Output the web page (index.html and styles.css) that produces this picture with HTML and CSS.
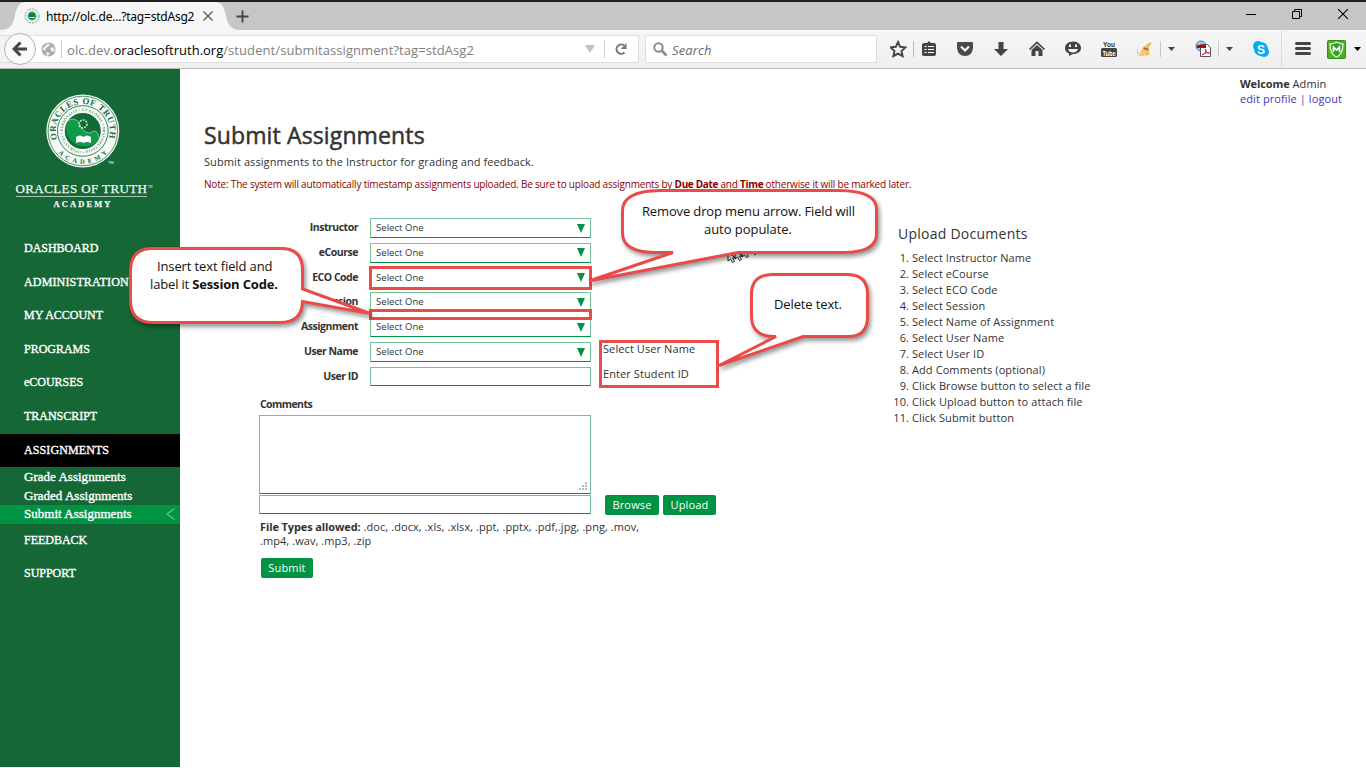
FILE: index.html
```html
<!DOCTYPE html>
<html lang="en">
<head>
<meta charset="utf-8">
<title>Submit Assignments</title>
<link rel="stylesheet" href="styles.css">
</head>
<body>
<header class="browser">
  <div class="tabbar">
    <svg class="tab-shape" width="240" height="28" viewBox="0 0 240 28"><path d="M0 28C10 28 13 23 15 13S20 0 27 0H215C222 0 224 5 226 14S231 28 241 28Z" fill="#f6f6f6"/></svg>
    <div class="tab">
      <svg class="favicon" width="16" height="16" viewBox="0 0 16 16"><circle cx="8" cy="8" r="7" fill="#eef7f1" stroke="#5cae81" stroke-dasharray="2 1"/><circle cx="8" cy="8" r="4.7" fill="#75b895"/><circle cx="8" cy="8" r="3.4" fill="#147c3e"/><path d="M5.5 9.5h5" stroke="#fff"/></svg>
      <span class="tab-title">http://olc.de...?tag=stdAsg2</span>
      <svg class="tab-close" width="12" height="12" viewBox="0 0 12 12"><path d="M1.5 1.5l9 9M10.5 1.5l-9 9" stroke="#555" stroke-width="1.2"/></svg>
    </div>
    <svg class="newtab" width="13" height="13" viewBox="0 0 13 13"><path d="M6.5 .5v12M.5 6.5h12" stroke="#444" stroke-width="1.8"/></svg>
    <div class="window-buttons">
      <svg width="10" height="10" viewBox="0 0 10 10"><path d="M0 5.500h10" stroke="#000"/></svg>
      <svg width="10" height="10" viewBox="0 0 10 10" fill="none" stroke="#000"><path d="M.5 2.500h7v7h-7zM2.500 2.500v-2h7v7h-2"/></svg>
      <svg width="10" height="10" viewBox="0 0 10 10"><path d="M0 0l10 10M10 0L0 10" stroke="#000" stroke-width="1.1"/></svg>
    </div>
  </div>
  <div class="toolbar">
    <div class="address">
      <div class="back"><svg width="16" height="16" viewBox="0 0 16 16" fill="none" stroke="#454545" stroke-width="3"><path d="M15 8H3M8.500 1.500L2 8l6.500 6.500"/></svg></div>
      <svg class="globe" width="15" height="15" viewBox="0 0 15 15"><circle cx="7.500" cy="7.500" r="7" fill="#aaa"/><path d="M7 1L9 3 7 5 5 6 4 9 1 7M9 6l3-1 2 3-2 2-2-1zM6 10l3 1-2 3-2-1z" fill="#eee"/></svg>
      <span class="sep"></span>
      <span class="url">olc.dev.<b>oraclesoftruth.org</b>/student/submitassignment?tag=stdAsg2</span>
      <svg class="url-arrow" width="10" height="8" viewBox="0 0 10 8"><path d="M0 0h10L5 8z" fill="#c3c3c3"/></svg>
      <span class="sep"></span>
      <svg class="reload" width="12" height="12" viewBox="0 0 12 12"><path d="M9.500 9.500A4.700 4.700 0 1 1 9 2.300" fill="none" stroke="#777" stroke-width="2"/><path d="M11.500 0v6H5.700z" fill="#777"/></svg>
    </div>
    <div class="search">
      <svg width="15" height="15" viewBox="0 0 15 15" fill="none" stroke="#8b8b8b"><circle cx="5.500" cy="5.500" r="4.200" stroke-width="2"/><path d="M8.500 8.500l5 5" stroke-width="2.600"/></svg>
      <span>Search</span>
    </div>
    <svg class="icons" width="476" height="38" viewBox="890 30 476 38">
      <path d="M898 42l2.200 4.800 5.200.6-3.900 3.600 1.100 5.200-4.600-2.600-4.600 2.600 1.100-5.200-3.900-3.600 5.200-.6z" fill="none" stroke="#444" stroke-width="1.900"/>
      <path d="M913.500 41v16" stroke="#bbb"/>
      <path d="M924 43h3l2-2 2 2h3q2 0 2 2v9q0 2-2 2h-10q-2 0-2-2v-9q0-2 2-2z" fill="#444"/>
      <path d="M924.500 46.500h2M924.500 49.500h2M924.500 52.500h2M928 46.500h6M928 49.500h6M928 52.500h6" stroke="#fff" stroke-width="1.200"/>
      <path d="M957 43q0-1 1-1h14q1 0 1 1v5q-1 8-8 8t-8-8z" fill="#4a4a4a"/><path d="M961 46.500l4 4 4-4" fill="none" stroke="#f8f8f8" stroke-width="2.200"/>
      <path d="M998.500 42h5v7h4.500l-7 7-7-7h4.500z" fill="#444"/>
      <path d="M1029.500 49.500l7.500-7 7.500 7" fill="none" stroke="#444" stroke-width="1.700"/><path d="M1031.500 50l5.500-5 5.500 5v6h-4v-5h-3v5h-4z" fill="#444"/>
      <path d="M1073 41.500c5 0 8 3 8 6.500s-3 6-8 6l-4 2v-2.500c-3-1-4-3-4-5.500 0-3.500 3-6.500 8-6.500z" fill="#444"/><path d="M1069 44.500h2v2.500h-2zM1075 44.500h2v2.500h-2zM1068 49h10q-1 3.500-5 3.500t-5-3.500z" fill="#f4f4f4"/>
      <text x="1103" y="47" class="you" textLength="12" lengthAdjust="spacingAndGlyphs">You</text><rect x="1101" y="48" width="16" height="9" rx="1.500" fill="#444"/><text x="1102.500" y="55.500" class="tube" textLength="13" lengthAdjust="spacingAndGlyphs">Tube</text>
      <path d="M1150 42l1.500 1-3 5 1 7-10 1-2-2 4-3 2-4z" fill="#efbe55"/><path d="M1143.500 48l5 1.500" stroke="#c6503a" stroke-width="1.400"/><path d="M1137 54l5-1M1139 55l5-3M1144 55l2-4" stroke="#fbe5a0"/><path d="M1137.500 49v5" stroke="#bccdb2"/>
      <path d="M1160.500 41v16M1218.500 41v16" stroke="#c2c8cf"/>
      <path d="M1168 47h7l-3.500 4zM1226 47h7l-3.500 4z" fill="#444"/>
      <circle cx="1201" cy="46" r="5" fill="#acc8e9" stroke="#4979b6"/><path d="M1200.500 44.500h7l3 3v9h-10z" fill="#fff" stroke="#555"/><path d="M1197 45h9v3h-9z" fill="#d00000"/><path d="M1202 55c4-2 4-4 3.500-6 0 3 2 4 4 4-3-.5-5 0-7.500 2z" fill="none" stroke="#c3202c"/>
      <circle cx="1258" cy="46" r="5" fill="#00aef0"/><circle cx="1264" cy="52" r="5" fill="#00aef0"/><circle cx="1261" cy="49" r="7" fill="#00aef0"/><text x="1257" y="53.500" class="skype">S</text>
      <path d="M1281.500 31v36" stroke="#dcdcdc"/>
      <path d="M1296.500 43.500h13M1296.500 48.500h13M1296.500 53.500h13" stroke="#444" stroke-width="3" stroke-linecap="round"/>
      <rect x="1327.500" y="40.500" width="18" height="18" rx="1" fill="#55ad20" stroke="#318c20"/><path d="M1330 44q4 0 6.500-2 2.500 2 6.500 2 0 10-6.500 13-6.500-3-6.500-13z" fill="#2f9d28" stroke="#e3f4df" stroke-width="1.300"/><path d="M1333.500 52v-5l3 3 3-3v5" fill="none" stroke="#fff" stroke-width="1.700"/>
      <path d="M1354 47h7l-3.500 4z" fill="#000"/>
    </svg>
  </div>
</header>
<div class="page">
  <aside class="sidebar">
    <svg class="logo" width="180" height="163" viewBox="0 0 180 163">
      <defs>
        <path id="ring-top" d="M57.100 70.300A27 27 0 1 1 108.500 70.300"/>
        <path id="ring-bottom" d="M50 62A32.800 32.800 0 0 0 115.600 62"/>
        <path id="ring-inner" d="M62.800 62A20 20 0 1 1 102.800 62A20 20 0 1 1 62.800 62"/>
      </defs>
      <circle cx="82.800" cy="62" r="36.500" fill="#f6faf7"/><circle cx="82.800" cy="62" r="34.800" fill="none" stroke="#237844" stroke-width=".8"/>
      <circle cx="82.800" cy="62" r="25.300" fill="none" stroke="#237844" stroke-width=".9"/>
      <circle cx="82.800" cy="62" r="18" fill="#126b35"/>
      <path d="M68 52C72 48 79 51 80 56S88 66 92 63S99 65 99 70A18 18 0 0 1 68 52Z" fill="#0d9b49"/>
      <path d="M68 52C72 48 79 51 80 56S88 66 92 63S99 65 99 70" fill="none" stroke="#b9ddc6" stroke-width=".7"/>
      <circle cx="83" cy="55" r="4" fill="none" stroke="#c5dfce" stroke-width="1.600" stroke-dasharray="2 1"/>
      <path d="M76 68q4-3 7.500 0 3.500-3 7.500 0v6q-4-2-7.500 0-3.500-2-7.500 0z" fill="#fff"/>
      <g class="seal-text">
        <text font-size="8.800"><textPath href="#ring-top" textLength="100">ORACLES OF TRUTH</textPath></text>
        <text font-size="6.500"><textPath href="#ring-bottom" startOffset="24" textLength="55">ACADEMY</textPath></text>
        <text font-size="3.500" opacity=".8"><textPath href="#ring-inner" textLength="123">PERSONALIS • ET GLOBAL • TRANSMUTATIO • OPERANTES •</textPath></text>
      </g>
      <text x="108" y="95" fill="#fff" font-size="4">TM</text>
      <g class="wordmark"><text x="15.500" y="124" font-size="13" textLength="131.500">ORACLES OF TRUTH</text><text x="53.500" y="138" font-size="8.500" font-weight="bold" textLength="57">ACADEMY</text><text x="148" y="119" font-size="3" class="tm">TM</text></g>
      <path d="M16 127.500h131" stroke="#a6c8b1"/>
    </svg>
    <nav class="nav">
      <a>DASHBOARD</a><a class="wide">ADMINISTRATION</a><a>MY ACCOUNT</a><a>PROGRAMS</a><a>eCOURSES</a><a>TRANSCRIPT</a>
      <a class="active">ASSIGNMENTS</a>
      <div class="subnav">
        <a>Grade Assignments</a><a>Graded Assignments</a>
        <a class="current">Submit Assignments<svg width="9" height="12" viewBox="0 0 9 12"><path d="M8.500 .5L1 6l7.500 5.500" fill="none" stroke="#6cc08d" stroke-width="1.200"/></svg></a>
      </div>
      <a>FEEDBACK</a><a>SUPPORT</a>
    </nav>
  </aside>
  <main class="main">
    <div class="userbar"><div><b>Welcome</b> Admin</div><div class="links"><a>edit profile</a> | <a>logout</a></div></div>
    <div class="columns">
      <section class="content">
        <h1>Submit Assignments</h1>
        <p class="intro">Submit assignments to the Instructor for grading and feedback.</p>
        <p class="note">Note: The system will automatically timestamp assignments uploaded. Be sure to upload assignments by <b>Due Date</b> and <b>Time</b> otherwise it will be marked later.</p>
        <div class="form">
          <div class="row"><label>Instructor</label><div class="select">Select One<i></i></div></div>
          <div class="row"><label>eCourse</label><div class="select">Select One<i></i></div></div>
          <div class="row"><label>ECO Code</label><div class="select">Select One<i></i></div></div>
          <div class="row"><label>Session</label><div class="select">Select One<i></i></div></div>
          <div class="row"><label>Assignment</label><div class="select">Select One<i></i></div></div>
          <div class="row"><label>User Name</label><div class="select">Select One<i></i></div><span class="hint">Select User Name</span></div>
          <div class="row"><label>User ID</label><div class="select text"></div><span class="hint">Enter Student ID</span></div>
        </div>
        <div class="lower">
          <label class="comments">Comments</label>
          <div class="textarea"><svg width="8" height="8" viewBox="0 0 8 8"><path d="M6 0h2v2H6zM3 3h2v2H3zM6 3h2v2H6zM0 6h2v2H0zM3 6h2v2H3zM6 6h2v2H6z" fill="#bbb"/></svg></div>
          <div class="filerow"><div class="file"></div><span class="btn browse">Browse</span><span class="btn upload">Upload</span></div>
          <p class="types"><b>File Types allowed:</b> .doc, .docx, .xls, .xlsx, .ppt, .pptx, .pdf,.jpg, .png, .mov,<br>.mp4, .wav, .mp3, .zip</p>
          <span class="btn submit">Submit</span>
        </div>
      </section>
      <section class="help">
        <h2>Upload Documents</h2>
        <ol>
          <li>Select Instructor Name</li><li>Select eCourse</li><li>Select ECO Code</li><li>Select Session</li><li>Select Name of Assignment</li><li>Select User Name</li><li>Select User ID</li><li>Add Comments (optional)</li><li>Click Browse button to select a file</li><li>Click Upload button to attach file</li><li>Click Submit button</li>
        </ol>
      </section>
    </div>
  </main>
</div>
<svg class="annotations" width="1366" height="768" viewBox="0 0 1366 768">
  <g fill="#fff" stroke="#222" stroke-width="1"><path d="M728 252v9l2.500-2 2 3.500 2-1-2-3.500h3zM735 250v9l2.500-2 2 3.500 2-1-2-3.500h3zM742 248v9l2.500-2 2 2.500 2-1-2-3h3zM753 248l2 7 3-4z"/></g>
  <g class="frames">
    <rect x="370.500" y="267.500" width="220" height="21"/>
    <rect x="370.500" y="310.500" width="220" height="8" class="blank"/>
    <rect x="600.500" y="341.500" width="117" height="45"/>
  </g>
  <g class="bubbles">
    <path d="M151 248.500H282Q302.500 249 302.500 270V289L370 313.500L302.500 301.500Q302 322.500 280 322.500H153Q130.500 322.500 130.500 300V271Q130.500 249 151 248.500Z"/>
    <path d="M660 190.500H839Q876.500 191 876.500 209V234Q876.500 252 844 252.500H738L589 281L673 252.500H655Q622.500 252 622.500 233V211Q622.500 191 660 190.500Z"/>
    <path d="M772 274.500H848Q867.500 275 867.500 294V317Q867.500 336.500 848 336.500H803L719 365.500L776 336.500Q751.500 337 751.500 316V294Q751.500 275 772 274.500Z"/>
  </g>
  <g class="bubble-text">
    <text x="157" y="271" textLength="115.500">Insert text field and</text>
    <text x="150" y="289" textLength="128">label it <tspan class="strong">Session Code.</tspan></text>
    <text x="642" y="216" textLength="213">Remove drop menu arrow. Field will</text>
    <text x="704" y="234" textLength="88">auto populate.</text>
    <text x="774" y="309" textLength="68">Delete text.</text>
  </g>
</svg>
</body>
</html>
```
FILE: styles.css
```css
* { box-sizing: border-box; }
body { margin: 0; width: 1366px; height: 768px; overflow: hidden; background: #fff; color: #333; font-family: "Open Sans", sans-serif; font-size: 11px; }
p, h1, h2, ol { margin: 0; padding: 0; }
.browser { height: 69px; border-top: 2px solid #1f1f1f; border-bottom: 1px solid #bcbcbc; }
.tabbar { height: 28px; background: #c6c6c6; display: flex; align-items: center; position: relative; }
.tab-shape { position: absolute; left: 0; top: 0; }
.tab { position: relative; display: flex; align-items: center; width: 236px; padding-left: 24px; height: 28px; }
.tab-title { margin-left: 6px; width: 150px; font: 12px "Noto Sans", sans-serif; color: #000; white-space: nowrap; letter-spacing: -.22px; }
.tab-close { margin-left: 6px; }
.newtab { position: relative; }
.window-buttons { margin-left: auto; display: flex; gap: 36px; padding-right: 18px; padding-bottom: 4px; }
.toolbar { height: 38px; background: linear-gradient(#f6f6f6, #efefef); display: flex; align-items: center; }
.address { width: 639px; height: 28px; background: #fff; border: 1px solid #dfdfdf; border-left: 0; display: flex; align-items: center; box-shadow: inset 12px 0 #f3f3f3; }
.back { width: 32px; height: 32px; margin-left: 4px; flex: none; border: 1px solid #b3b3b3; border-radius: 50%; background: #fafafa; display: flex; align-items: center; justify-content: center; }
.globe { margin-left: 5px; flex: none; }
.sep { width: 1px; height: 18px; background: #d0d0d0; margin-left: 5px; flex: none; }
.url { margin-left: 5px; width: 513px; padding-top: 2px; font-size: 13px; letter-spacing: .08px; color: #808080; white-space: nowrap; line-height: 18px; }
.url b { font-weight: 400; color: #000; letter-spacing: 0; }
.url-arrow { margin-left: 5px; flex: none; }
.url-arrow + .sep { margin-left: 9px; }
.reload { margin-left: 10px; flex: none; }
.search { width: 232px; height: 28px; margin-left: 6px; background: #fff; border: 1px solid #dfdfdf; display: flex; align-items: center; padding-left: 7px; gap: 4px; font-size: 13px; font-style: italic; color: #6b6b6b; }
.search span { padding-top: 2px; letter-spacing: .1px; }
.icons { margin-left: 13px; flex: none; }
.you { font: bold 8px "Liberation Sans", sans-serif; fill: #333; }
.tube { font: bold 7.5px "Liberation Sans", sans-serif; fill: #fff; }
.skype { font: bold 12px "Liberation Sans", sans-serif; fill: #fff; }
.page { display: flex; height: 698px; }
.sidebar { width: 180px; background: #156735; flex: none; }
.logo { display: block; }
.seal-text { font-family: "Liberation Serif", serif; font-weight: bold; fill: #176b38; }
.wordmark { font-family: "Liberation Serif", serif; fill: #f1f7f3; stroke: #f1f7f3; stroke-width: .25px; }
.tm { stroke: none; }
.nav { font: 12px "Liberation Serif", serif; color: #fff; -webkit-text-stroke: .35px #fff; }
.nav > a { display: block; height: 33.600px; line-height: 33.800px; padding-left: 24px; letter-spacing: -.02px; }
.nav > .wide { letter-spacing: .15px; }
.nav > .active { background: #000; letter-spacing: .1px; }
.subnav { font-size: 13px; padding: 1px 0 0; letter-spacing: .02px; }
.subnav a { display: flex; height: 18.500px; align-items: center; padding-left: 24px; }
.subnav .current { background: #009344; justify-content: space-between; padding-right: 5px; }
.main { flex: 1; }
.userbar { margin-left: 1060px; padding-top: 7px; line-height: 15px; height: 38px; white-space: nowrap; letter-spacing: .09px; }
.userbar b { font-weight: 700; letter-spacing: -.1px; }
.links { color: #4335b4; }
.columns { display: flex; letter-spacing: .09px; }
.content { width: 718px; padding: 12px 0 0 24px; flex: none; }
h1 { font-size: 23px; line-height: 32px; font-weight: 400; -webkit-text-stroke: .5px #333; letter-spacing: .13px; }
.intro { margin-top: 3px; line-height: 16px; }
.note { margin-top: 7px; line-height: 15px; font-size: 10px; color: #8b0000; white-space: nowrap; letter-spacing: -.19px; }
.note b { letter-spacing: -.35px; }
.form { margin-top: 26px; }
.row { display: grid; grid-template-columns: 154px 221px 1fr; column-gap: 12px; height: 24.830px; align-items: start; }
.row label, .comments { font-weight: 700; font-size: 10.500px; letter-spacing: -.58px; line-height: 18px; }
.row label { text-align: right; }
.row label { letter-spacing: -.48px; }
.select { height: 20px; border: 1px solid #74c297; border-bottom-color: #009344; padding: 0 5px; font-size: 9.500px; line-height: 18px; display: flex; justify-content: space-between; align-items: center; letter-spacing: .05px; }
.select i { border: solid transparent; border-width: 9px 4.500px 0; border-top-color: #009344; }
.text { height: 19px; }
.hint { line-height: 14px; }
.lower { padding: 3px 0 0 55px; }
.comments { display: block; height: 20px; padding-left: 1px; }
.textarea { width: 332px; height: 79px; border: 1px solid #74c297; border-bottom-color: #009344; display: flex; align-items: flex-end; justify-content: flex-end; padding: 3px; }
.filerow { display: flex; align-items: center; margin-top: 1px; }
.file { width: 332px; height: 19px; border: 1px solid #74c297; border-bottom-color: #009344; }
.btn { display: inline-block; height: 20px; border-radius: 2px; background: #009344; color: #fff; text-align: center; line-height: 20px; letter-spacing: .15px; }
.browse { width: 54px; margin-left: 14px; }
.upload { width: 53px; margin-left: 4px; }
.types { margin: 5px 0 0 1px; line-height: 14px; white-space: nowrap; letter-spacing: .07px; }
.types b { font-weight: 700; letter-spacing: -.11px; }
.submit { margin: 10px 0 0 2px; width: 52px; }
.help { padding-top: 117px; }
.help h2 { font-size: 14px; font-weight: 400; line-height: 20px; letter-spacing: .25px; }
.help ol { margin-top: 6px; padding-left: 14px; line-height: 16px; }
.annotations { position: absolute; left: 0; top: 0; }
.frames { fill: none; stroke: #ea4b48; stroke-width: 3; }
.frames .blank { fill: #fff; }
.bubbles { fill: #fff; stroke: #ea4b48; stroke-width: 3; filter: drop-shadow(2px 3px 2px rgba(0, 0, 0, .4)); }
.bubble-text { font-size: 13px; fill: #111; }
.strong { font-weight: 700; }
```
